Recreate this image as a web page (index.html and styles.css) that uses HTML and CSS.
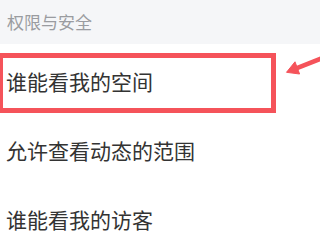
FILE: index.html
```html
<!DOCTYPE html>
<html lang="zh-CN">
<head>
<meta charset="utf-8">
<link rel="stylesheet" href="styles.css">
</head>
<body>
<div class="screen">
  <div class="section-title">权限与安全</div>
  <ul class="list">
    <li class="row">谁能看我的空间</li>
    <li class="row">允许查看动态的范围</li>
    <li class="row">谁能看我的访客</li>
  </ul>
  <div class="highlight"></div>
  <svg class="arrow" width="40" height="30" viewBox="0 0 40 30">
    <line x1="44" y1="7.4" x2="15" y2="18.8" stroke="#f5535a" stroke-width="4.5" stroke-linecap="round"/>
    <polygon points="6.5,22.3 15,11.8 19.6,24" fill="#f5535a" stroke="#f5535a" stroke-width="1" stroke-linejoin="round"/>
  </svg>
</div>
</body>
</html>
```
FILE: styles.css
```css
html, body {
  margin: 0;
  padding: 0;
  background: #ffffff;
}
.screen {
  position: relative;
  width: 320px;
  height: 240px;
  overflow: hidden;
  font-family: "Noto Sans CJK SC", "Noto Sans", sans-serif;
}
.section-title {
  height: 44px;
  background: #f5f6f8;
  color: #9a9ca0;
  font-size: 17px;
  line-height: 44px;
  padding-left: 7px;
}
.list {
  list-style: none;
  margin: 0;
  padding: 3px 0 0 0;
}
.row {
  height: 69px;
  line-height: 69px;
  padding-left: 6px;
  font-size: 21px;
  color: #333333;
}
.highlight {
  position: absolute;
  left: -2px;
  top: 53px;
  width: 268px;
  height: 50px;
  border: 5px solid #f5535a;
}
.arrow {
  position: absolute;
  left: 280px;
  top: 50px;
}
```
